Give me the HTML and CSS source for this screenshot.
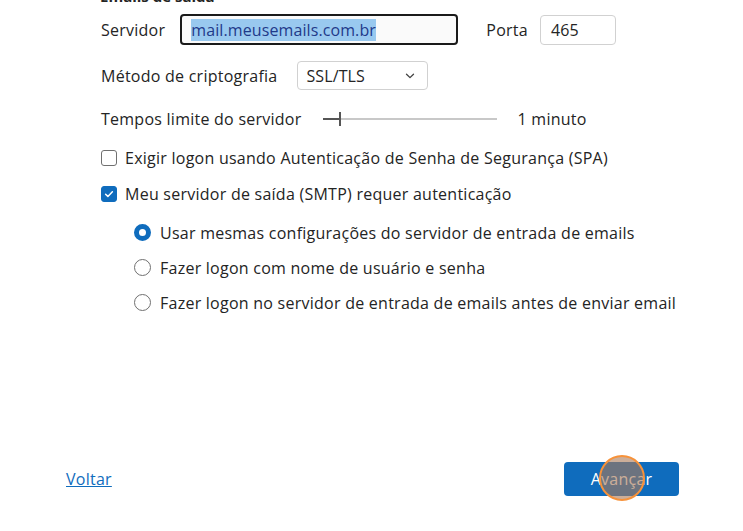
FILE: index.html
```html
<!DOCTYPE html>
<html lang="pt-BR">
<head>
  <meta charset="UTF-8">
  <title>Configurações de servidor</title>
  <link rel="stylesheet" href="styles.css">
</head>
<body>
  <div class="wizard">
    <div class="form">
      <h2 class="section-title">Emails de saída</h2>

      <div class="row row-server">
        <label class="label">Servidor</label>
        <div class="input input-focus"><span class="selected">mail.meusemails.com.br</span></div>
        <label class="label label-port">Porta</label>
        <div class="input input-port">465</div>
      </div>

      <div class="row row-crypto">
        <label class="label">Método de criptografia</label>
        <div class="select">
          <span>SSL/TLS</span>
          <svg width="10" height="6" viewBox="0 0 10 6"><path d="M1.5 1.2 5 4.6 8.5 1.2" fill="none" stroke="#424242" stroke-width="1.3" stroke-linecap="round" stroke-linejoin="round"/></svg>
        </div>
      </div>

      <div class="row row-timeout">
        <label class="label">Tempos limite do servidor</label>
        <div class="slider">
          <div class="slider-fill"></div>
          <div class="slider-thumb"></div>
        </div>
        <span class="label">1 minuto</span>
      </div>

      <div class="row row-check first-check">
        <span class="checkbox"></span>
        <span class="label">Exigir logon usando Autenticação de Senha de Segurança (SPA)</span>
      </div>

      <div class="row row-check">
        <span class="checkbox checked">
          <svg width="12" height="12" viewBox="0 0 12 12"><path d="M2.6 6.2 4.9 8.4 9.4 3.7" fill="none" stroke="#fff" stroke-width="1.5" stroke-linecap="round" stroke-linejoin="round"/></svg>
        </span>
        <span class="label">Meu servidor de saída (SMTP) requer autenticação</span>
      </div>

      <div class="radios">
        <div class="row row-radio">
          <span class="radio checked"></span>
          <span class="label">Usar mesmas configurações do servidor de entrada de emails</span>
        </div>
        <div class="row row-radio">
          <span class="radio"></span>
          <span class="label">Fazer logon com nome de usuário e senha</span>
        </div>
        <div class="row row-radio">
          <span class="radio"></span>
          <span class="label">Fazer logon no servidor de entrada de emails antes de enviar email</span>
        </div>
      </div>
    </div>

    <div class="footer">
      <a href="#" class="link">Voltar</a>
      <div class="btn-wrap">
        <button class="btn">Avançar</button>
        <span class="click-marker"></span>
      </div>
    </div>
  </div>
</body>
</html>
```

FILE: styles.css
```css
body {
  margin: 0;
  background: #fff;
  font-family: "Open Sans", "Noto Sans", sans-serif;
  font-size: 16px;
  color: #242424;
  overflow: hidden;
}
.wizard {
  height: 531px;
  display: flex;
  flex-direction: column;
}
.form {
  padding-left: 101px;
}
.section-title {
  margin: -12px 0 0 -1px;
  height: 16px;
  font-size: 15px;
  font-weight: 700;
  line-height: 16px;
}
.row {
  display: flex;
  align-items: center;
}
.label {
  letter-spacing: 0.25px;
  white-space: nowrap;
}
.row-server {
  height: 31px;
  margin-top: 10px;
}
.input {
  box-sizing: border-box;
  height: 31px;
  border: 1px solid #d1d1d1;
  border-radius: 4px;
  display: flex;
  align-items: center;
  padding-left: 10px;
  letter-spacing: 0.1px;
}
.input-focus {
  margin-left: 15px;
  width: 278px;
  padding-left: 9px;
  border: 2px solid #1a1a1a;
  background: #fafafa;
}
.selected {
  background: #99c9ef;
  color: #1f3a8a;
  line-height: 22px;
}
.label-port {
  margin-left: 28px;
}
.input-port {
  margin-left: 12px;
  width: 76px;
  height: 30px;
}
.row-crypto {
  margin-top: 16px;
  height: 29px;
}
.select {
  box-sizing: border-box;
  margin-left: 19px;
  width: 131px;
  height: 29px;
  border: 1px solid #d1d1d1;
  border-radius: 4px;
  display: flex;
  align-items: center;
  justify-content: space-between;
  padding: 0 12px 0 9px;
  letter-spacing: 0.1px;
}
.row-timeout {
  margin-top: 14px;
  height: 29px;
}
.slider {
  position: relative;
  margin: 0 21px 0 21px;
  width: 174px;
  height: 2px;
  background: #c8c8c8;
}
.slider-fill {
  width: 17px;
  height: 2px;
  background: #555;
}
.slider-thumb {
  position: absolute;
  left: 16px;
  top: -6px;
  width: 2px;
  height: 14px;
  background: #555;
}
.row-check {
  height: 36px;
}
.first-check {
  margin-top: 7px;
}
.checkbox {
  box-sizing: border-box;
  width: 16px;
  height: 16px;
  border: 1px solid #707070;
  border-radius: 3px;
  margin-right: 8px;
  display: flex;
  align-items: center;
  justify-content: center;
}
.checkbox.checked {
  background: #0f6cbd;
  border-color: #0f6cbd;
}
.radios {
  margin-top: 3px;
  padding-left: 33px;
}
.row-radio {
  height: 35px;
}
.radio {
  box-sizing: border-box;
  width: 17px;
  height: 17px;
  border: 1px solid #707070;
  border-radius: 50%;
  margin-right: 9px;
}
.radio.checked {
  border: 5px solid #0f6cbd;
}
.footer {
  margin-top: auto;
  display: flex;
  align-items: center;
  justify-content: space-between;
  padding: 0 64px 35px 66px;
}
.link {
  color: #0f6cbd;
  text-decoration: underline;
  letter-spacing: 0.25px;
}
.btn-wrap {
  position: relative;
}
.btn {
  width: 115px;
  height: 34px;
  background: #0f6cbd;
  color: #fff;
  border: none;
  border-radius: 4px;
  font-family: inherit;
  font-size: 16px;
  letter-spacing: 0.25px;
}
.click-marker {
  position: absolute;
  left: 35px;
  top: -7px;
  width: 46px;
  height: 46px;
  box-sizing: border-box;
  border-radius: 50%;
  border: 2px solid #f7923a;
  background: rgba(170, 120, 85, 0.6);
}
```
